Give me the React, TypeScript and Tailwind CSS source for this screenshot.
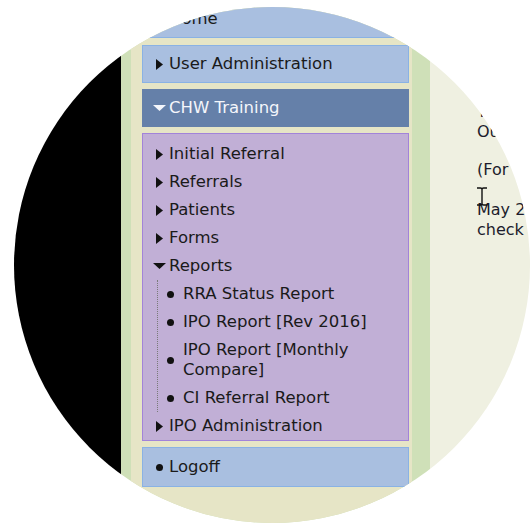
import React from "react";

const font = { fontFamily: '"DejaVu Sans", Verdana, sans-serif' };

function RightTri({ color = "#111" }: { color?: string }) {
  return (
    <svg width="7" height="11" viewBox="0 0 7 11" className="block">
      <polygon points="0,0 7,5.5 0,11" fill={color} />
    </svg>
  );
}

function DownTri({ color = "#111" }: { color?: string }) {
  return (
    <svg width="13" height="6" viewBox="0 0 13 6" className="block">
      <polygon points="0,0 13,0 6.5,6" fill={color} />
    </svg>
  );
}

function Bullet() {
  return <span className="block w-[7px] h-[7px] rounded-full bg-[#111]" />;
}

function Row({ icon, label }: { icon: React.ReactNode; label: string }) {
  return (
    <div className="flex items-center py-[4px]">
      <div className="w-[19px] flex justify-center shrink-0">{icon}</div>
      <div className="leading-[20px]">{label}</div>
    </div>
  );
}

function SubRow({ label }: { label: string }) {
  return (
    <div className="flex items-center py-[4px]">
      <div className="w-[25px] flex justify-center shrink-0 pr-[1px]">
        <Bullet />
      </div>
      <div className="leading-[20px] pr-[8px]">{label}</div>
    </div>
  );
}

export default function App() {
  return (
    <div className="w-[531px] h-[525px] bg-white overflow-hidden" style={font}>
      <div className="ml-[14px] mt-[7px] w-[516px] h-[516px] rounded-full overflow-hidden">
        <div className="flex -mt-[7px] h-[530px] text-[16.5px] text-[#1a1a1a]">
          {/* black left area */}
          <div className="w-[107px] bg-black shrink-0" />
          {/* sidebar */}
          <div className="w-[309px] shrink-0 bg-[#cfe0b8] pl-[10px] pr-[18px]">
            <div className="h-full bg-[#e6e5c6] pl-[11px] pr-[3px] flex flex-col">
              {/* Home */}
              <div className="h-[38px] bg-[#a9bfe0] border border-[#8ab2e4] flex items-center pl-[7px]">
                <div className="w-[19px] flex justify-center shrink-0">
                  <Bullet />
                </div>
                <div className="leading-[20px]">Home</div>
              </div>
              {/* User Administration */}
              <div className="mt-[7px] h-[38px] bg-[#a9bfe0] border border-[#8ab2e4] flex items-center pl-[7px]">
                <div className="w-[19px] flex justify-center shrink-0">
                  <RightTri />
                </div>
                <div className="leading-[20px]">User Administration</div>
              </div>
              {/* CHW Training */}
              <div className="mt-[6px] h-[38px] bg-[#6580a9] border border-[#6580a9] flex items-center pl-[7px] text-[#f4f6fb]">
                <div className="w-[19px] flex justify-center shrink-0">
                  <DownTri color="#f4f6fb" />
                </div>
                <div className="leading-[20px]">CHW Training</div>
              </div>
              {/* purple submenu */}
              <div className="mt-[6px] bg-[#c1afd6] border border-[#a283d9] pl-[7px] pt-[6px]">
                <Row icon={<RightTri />} label="Initial Referral" />
                <Row icon={<RightTri />} label="Referrals" />
                <Row icon={<RightTri />} label="Patients" />
                <Row icon={<RightTri />} label="Forms" />
                <Row icon={<DownTri />} label="Reports" />
                <div className="ml-[7px] border-l border-dotted border-[#7a7a7a]">
                  <SubRow label="RRA Status Report" />
                  <SubRow label="IPO Report [Rev 2016]" />
                  <SubRow label="IPO Report [Monthly Compare]" />
                  <SubRow label="CI Referral Report" />
                </div>
                <Row icon={<RightTri />} label="IPO Administration" />
              </div>
              {/* Logoff */}
              <div className="mt-[6px] h-[40px] bg-[#a9bfe0] border border-[#8ab2e4] flex items-center pl-[7px]">
                <div className="w-[19px] flex justify-center shrink-0">
                  <Bullet />
                </div>
                <div className="leading-[20px]">Logoff</div>
              </div>
            </div>
          </div>
          {/* content */}
          <div className="flex-1 bg-[#eff0e1] pl-[47px] pt-[102px] text-[16px] text-[#1c1c2c] relative">
            <div className="leading-[20px] whitespace-nowrap">The following reports are</div>
            <div className="leading-[20px] whitespace-nowrap">Outstanding referrals</div>
            <div className="mt-[18px] leading-[20px] whitespace-nowrap">(For CHW Training)</div>
            <div className="mt-[20px] leading-[20px] whitespace-nowrap">May 2016 report</div>
            <div className="leading-[20px] whitespace-nowrap">check</div>
            <svg
              width="12"
              height="19"
              viewBox="0 0 12 19"
              className="absolute left-[46px] top-[187px]"
            >
              <path d="M1 1 H4.5 Q6 1 6 2.5 V16.5 Q6 18 4.5 18 H1 M11 1 H7.5 Q6 1 6 2.5 M11 18 H7.5 Q6 18 6 16.5" stroke="#111" strokeWidth="1.4" fill="none" />
            </svg>
          </div>
        </div>
      </div>
    </div>
  );
}
